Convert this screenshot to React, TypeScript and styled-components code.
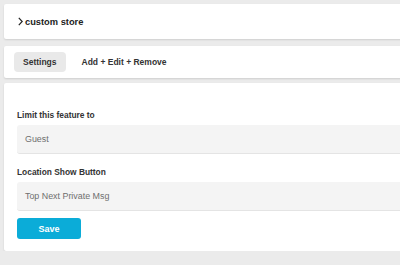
import React from 'react';
import styled, { createGlobalStyle } from 'styled-components';

const GlobalStyle = createGlobalStyle`
  body {
    margin: 0;
    background: #ebebeb;
    font-family: "Liberation Sans", Arial, sans-serif;
    overflow: hidden;
  }
`;

const Page = styled.div`
  width: 520px;
  padding: 4px 0 0 4px;
  display: flex;
  flex-direction: column;
  gap: 7px;
`;

const Card = styled.div`
  background: #fff;
  border-radius: 2px;
  box-shadow: 0 1px 2px rgba(0, 0, 0, 0.12);
`;

const TitleBar = styled(Card)`
  height: 35px;
  display: flex;
  align-items: center;
  padding-left: 14px;
  gap: 2px;
  font-size: 9.3px;
  font-weight: bold;
  color: #222;
`;

const Chevron = styled.svg`
  width: 5px;
  height: 9px;
`;

const Tabs = styled(Card)`
  height: 32px;
  display: flex;
  align-items: center;
  padding-left: 10px;
  gap: 16px;
`;

const Tab = styled.div<{ $active?: boolean }>`
  font-size: 8.5px;
  font-weight: bold;
  color: #333;
  padding: ${(p) => (p.$active ? '0 9px' : '0')};
  height: 20px;
  line-height: 20px;
  border-radius: 4px;
  background: ${(p) => (p.$active ? '#e9e9e9' : 'transparent')};
`;

const Form = styled(Card)`
  margin-top: -2px;
  padding: 27px 0 12px 13px;
  display: flex;
  flex-direction: column;
`;

const Label = styled.div`
  font-size: 8.4px;
  line-height: 10px;
  font-weight: bold;
  color: #333;
  margin-bottom: 5px;
`;

const Field = styled.div`
  height: 28px;
  background: #f4f4f4;
  border-radius: 3px;
  border-bottom: 1px solid #e4e4e4;
  display: flex;
  align-items: center;
  padding-left: 8px;
  font-size: 8.9px;
  color: #6f6f6f;
  margin-bottom: 13px;
  &:last-of-type {
    margin-bottom: 7px;
  }
`;

const SaveButton = styled.button`
  width: 64px;
  height: 21px;
  border: none;
  border-radius: 3px;
  background: #0bacd8;
  color: #fff;
  font-family: inherit;
  font-size: 9px;
  font-weight: bold;
`;

export default function App() {
  return (
    <>
      <GlobalStyle />
      <Page>
        <TitleBar>
          <Chevron viewBox="0 0 5 9">
            <path d="M0.8 0.8 L4.2 4.5 L0.8 8.2" fill="none" stroke="#222" strokeWidth="1.2" />
          </Chevron>
          custom store
        </TitleBar>
        <Tabs>
          <Tab $active>Settings</Tab>
          <Tab>Add + Edit + Remove</Tab>
        </Tabs>
        <Form>
          <Label>Limit this feature to</Label>
          <Field>Guest</Field>
          <Label>Location Show Button</Label>
          <Field>Top Next Private Msg</Field>
          <SaveButton>Save</SaveButton>
        </Form>
      </Page>
    </>
  );
}
